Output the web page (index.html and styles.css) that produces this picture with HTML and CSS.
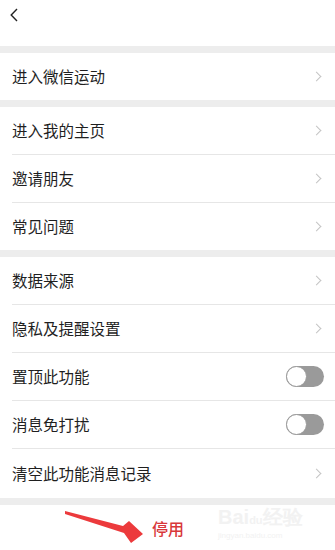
FILE: index.html
```html
<!DOCTYPE html>
<html lang="zh">
<head>
<meta charset="utf-8">
<link rel="stylesheet" href="styles.css">
</head>
<body>
<div class="page">
  <header class="topbar">
    <svg class="back" width="8" height="14" viewBox="0 0 8 14"><path d="M7 1 L1.2 7 L7 13" fill="none" stroke="#222" stroke-width="1.4"/></svg>
  </header>
  <div class="gap"></div>
  <section class="group">
    <div class="row"><span class="label">进入微信运动</span><span class="chev"></span></div>
  </section>
  <div class="gap"></div>
  <section class="group">
    <div class="row"><span class="label">进入我的主页</span><span class="chev"></span></div>
    <div class="row"><span class="label">邀请朋友</span><span class="chev"></span></div>
    <div class="row"><span class="label">常见问题</span><span class="chev"></span></div>
  </section>
  <div class="gap"></div>
  <section class="group long">
    <div class="row"><span class="label">数据来源</span><span class="chev"></span></div>
    <div class="row"><span class="label">隐私及提醒设置</span><span class="chev"></span></div>
    <div class="row"><span class="label">置顶此功能</span><span class="switch"><span class="knob"></span></span></div>
    <div class="row"><span class="label">消息免打扰</span><span class="switch"><span class="knob"></span></span></div>
    <div class="row"><span class="label">清空此功能消息记录</span><span class="chev"></span></div>
  </section>
  <div class="gap"></div>
  <footer class="bottom">
    <span class="stop">停用</span>
    <div class="watermark">
      <span class="wm-big">Bai<span class="paw">du</span>经验</span>
      <span class="wm-small">jingyan.baidu.com</span>
    </div>
    <svg class="arrow" width="335" height="50" viewBox="0 0 335 50">
      <polygon points="65,6 123,21 129,16 143,29 131,38 124,28 65,9" fill="#ec3a3c"/>
    </svg>
  </footer>
</div>
</body>
</html>
```
FILE: styles.css
```css
* { box-sizing: border-box; }
html, body { margin: 0; padding: 0; }
body {
  background: #fff;
  font-family: "Noto Sans CJK SC", "Noto Sans", sans-serif;
  color: #222;
}
.page { width: 335px; height: 550px; overflow: hidden; display: flex; flex-direction: column; }
.topbar { height: 46px; padding: 8px 0 0 10px; background: #fff; }
.back { display: block; }
.gap { height: 7px; background: #ededed; flex: none; }
.group { background: #fff; }
.row {
  height: 48px;
  margin-left: 12px;
  padding-right: 13px;
  display: flex;
  align-items: center;
  justify-content: space-between;
  border-bottom: 1px solid #e6e6e6;
}
.row:last-child { height: 47px; border-bottom: none; }
.group.long .row:last-child { height: 49px; }
.label { font-size: 15.5px; line-height: 1; color: #1f1f1f; letter-spacing: 0; }
.chev {
  width: 7px; height: 7px;
  border-top: 1.3px solid #c4c4c4;
  border-right: 1.3px solid #c4c4c4;
  transform: rotate(45deg);
  margin-right: 2px;
}
.switch {
  width: 38px; height: 21px;
  border-radius: 11px;
  background: #9a9a9a;
  position: relative;
  margin-right: -2px;
}
.knob {
  position: absolute; left: 0; top: 0;
  width: 21px; height: 21px;
  border-radius: 50%;
  background: #fff;
  border: 1.5px solid #9a9a9a;
}
.bottom { flex: 1; position: relative; background: #fff; display: flex; justify-content: center; }
.stop { margin-top: 13px; font-size: 16px; color: #d8383a; font-weight: 500; height: 20px; line-height: 20px; margin-left: 1px; }
.watermark {
  position: absolute; left: 218px; top: 1px;
  display: flex; flex-direction: column; align-items: flex-start;
  color: #f2f2f2; font-family: "Liberation Sans", sans-serif;
}
.wm-big { font-size: 20px; font-weight: bold; line-height: 22px; }
.paw { font-size: 11px; }
.wm-small { font-size: 8px; line-height: 10px; }
.arrow { position: absolute; left: 0; top: 0; }
```
